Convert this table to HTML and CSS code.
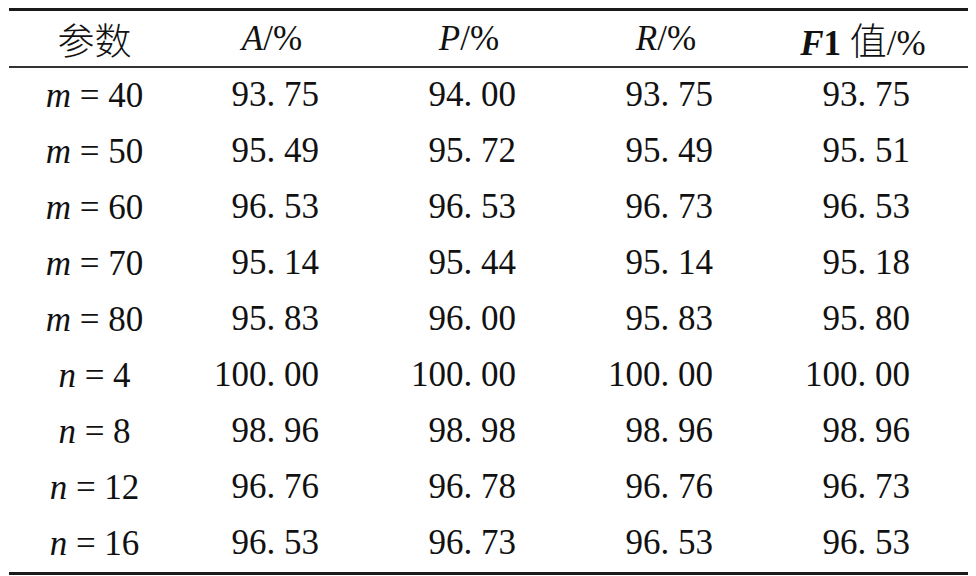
FILE: index.html
```html
<!DOCTYPE html>
<html lang="en">
  <head>
    <meta charset="UTF-8" />
    <title>Parameter comparison</title>
    <link rel="stylesheet" href="styles.css">
  </head>
  <body>
    <div class="paramTable">
      <!-- Header -->
      <div class="pRow pHead">
        <div class="pCell pFirst"><span class="cjk" lang="zh-CN">参数</span></div>
        <div class="pCell"><i>A</i>/%</div>
        <div class="pCell"><i>P</i>/%</div>
        <div class="pCell"><i>R</i>/%</div>
        <div class="pCell"><b><i>F</i>1</b> <span class="cjk" lang="zh-CN">值</span>/%</div>
      </div>

      <!-- Rows -->
      <div class="pRow"><div class="pCell pFirst"><i>m</i> = 40</div><div class="pCell pNum">93. 75</div><div class="pCell pNum">94. 00</div><div class="pCell pNum">93. 75</div><div class="pCell pNum">93. 75</div></div>
      <div class="pRow"><div class="pCell pFirst"><i>m</i> = 50</div><div class="pCell pNum">95. 49</div><div class="pCell pNum">95. 72</div><div class="pCell pNum">95. 49</div><div class="pCell pNum">95. 51</div></div>
      <div class="pRow"><div class="pCell pFirst"><i>m</i> = 60</div><div class="pCell pNum">96. 53</div><div class="pCell pNum">96. 53</div><div class="pCell pNum">96. 73</div><div class="pCell pNum">96. 53</div></div>
      <div class="pRow"><div class="pCell pFirst"><i>m</i> = 70</div><div class="pCell pNum">95. 14</div><div class="pCell pNum">95. 44</div><div class="pCell pNum">95. 14</div><div class="pCell pNum">95. 18</div></div>
      <div class="pRow"><div class="pCell pFirst"><i>m</i> = 80</div><div class="pCell pNum">95. 83</div><div class="pCell pNum">96. 00</div><div class="pCell pNum">95. 83</div><div class="pCell pNum">95. 80</div></div>
      <div class="pRow"><div class="pCell pFirst"><i>n</i> = 4</div><div class="pCell pNum">100. 00</div><div class="pCell pNum">100. 00</div><div class="pCell pNum">100. 00</div><div class="pCell pNum">100. 00</div></div>
      <div class="pRow"><div class="pCell pFirst"><i>n</i> = 8</div><div class="pCell pNum">98. 96</div><div class="pCell pNum">98. 98</div><div class="pCell pNum">98. 96</div><div class="pCell pNum">98. 96</div></div>
      <div class="pRow"><div class="pCell pFirst"><i>n</i> = 12</div><div class="pCell pNum">96. 76</div><div class="pCell pNum">96. 78</div><div class="pCell pNum">96. 76</div><div class="pCell pNum">96. 73</div></div>
      <div class="pRow"><div class="pCell pFirst"><i>n</i> = 16</div><div class="pCell pNum">96. 53</div><div class="pCell pNum">96. 73</div><div class="pCell pNum">96. 53</div><div class="pCell pNum">96. 53</div></div>
    </div>
  </body>
</html>
```

FILE: styles.css
```css
body {
  margin: 0;
  padding: 8px 0 0 9px;
  background: #fff;
  color: #111;
  font-family: "Liberation Serif", "Times New Roman", serif;
  font-size: 35px;
}

/* Table */
.paramTable {
  width: 959px;
  border-top: 3px solid #1a1a1a;
  border-bottom: 3px solid #1a1a1a;
}

.pRow {
  display: grid;
  grid-template-columns: 171px repeat(4, 197px);
  height: 56px;
  align-items: center;
}

.pRow.pHead {
  height: 55px;
  border-bottom: 2px solid #333;
}

.pCell {
  font-family: "Liberation Serif", "Times New Roman", serif !important;
  padding-right: 13px;
  text-align: center;
}

.pCell i,
.pCell b {
  font-family: "Liberation Serif", "Times New Roman", serif !important;
}

.pCell.pFirst {
  padding-right: 0;
}

.pCell.pNum {
  padding: 0 58px 3px 0;
  text-align: right;
}

.pCell .cjk {
  font-family: "Noto Sans CJK SC", sans-serif !important;
  font-weight: 300;
  font-size: 37px;
}
```
